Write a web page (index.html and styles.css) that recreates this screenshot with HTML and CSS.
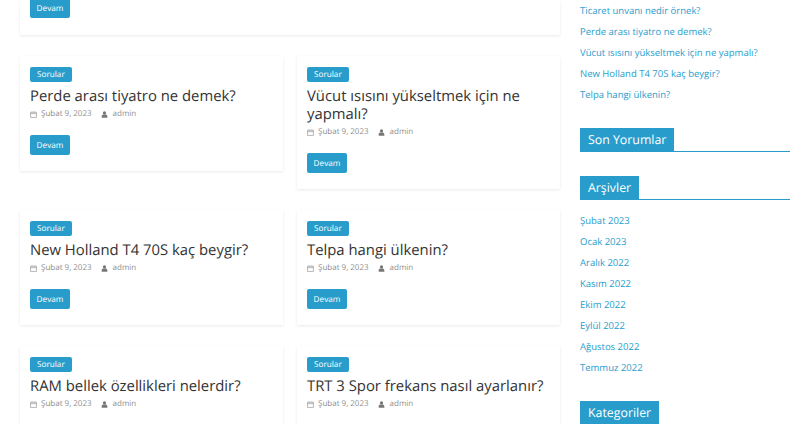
FILE: index.html
```html
<!DOCTYPE html>
<html lang="tr">
<head>
<meta charset="utf-8">
<title>Sorular</title>
<link rel="stylesheet" href="styles.css">
</head>
<body>
<svg class="defs" width="0" height="0" aria-hidden="true">
  <symbol id="cal" viewBox="0 0 10 10"><path d="M.8 1.8h8.4v7.4h-8.4zM.8 3.8h8.4M3 .6v1.6M7 .6v1.6" fill="none" stroke="currentColor" stroke-width=".9"/></symbol>
  <symbol id="usr" viewBox="0 0 10 10"><circle cx="5" cy="2.8" r="2.3" fill="currentColor"/><path d="M1 9.6v-1.8c0-1.8 1.2-2.8 2.2-2.8h3.6c1 0 2.2 1 2.2 2.8v1.8z" fill="currentColor"/></symbol>
</svg>
<div class="page">
  <main class="content">
    <article class="card wide">
      <a class="btn">Devam</a>
    </article>
    <div class="grid">
      <article class="card">
        <a class="tag">Sorular</a>
        <h2>Perde arası tiyatro ne demek?</h2>
        <p class="meta"><svg class="ic"><use href="#cal"/></svg><span>Şubat 9, 2023</span><svg class="ic usr"><use href="#usr"/></svg><span>admin</span></p>
        <a class="btn">Devam</a>
      </article>
      <article class="card">
        <a class="tag">Sorular</a>
        <h2>Vücut ısısını yükseltmek için ne yapmalı?</h2>
        <p class="meta"><svg class="ic"><use href="#cal"/></svg><span>Şubat 9, 2023</span><svg class="ic usr"><use href="#usr"/></svg><span>admin</span></p>
        <a class="btn">Devam</a>
      </article>
      <article class="card">
        <a class="tag">Sorular</a>
        <h2>New Holland T4 70S kaç beygir?</h2>
        <p class="meta"><svg class="ic"><use href="#cal"/></svg><span>Şubat 9, 2023</span><svg class="ic usr"><use href="#usr"/></svg><span>admin</span></p>
        <a class="btn">Devam</a>
      </article>
      <article class="card">
        <a class="tag">Sorular</a>
        <h2>Telpa hangi ülkenin?</h2>
        <p class="meta"><svg class="ic"><use href="#cal"/></svg><span>Şubat 9, 2023</span><svg class="ic usr"><use href="#usr"/></svg><span>admin</span></p>
        <a class="btn">Devam</a>
      </article>
      <article class="card">
        <a class="tag">Sorular</a>
        <h2>RAM bellek özellikleri nelerdir?</h2>
        <p class="meta"><svg class="ic"><use href="#cal"/></svg><span>Şubat 9, 2023</span><svg class="ic usr"><use href="#usr"/></svg><span>admin</span></p>
      </article>
      <article class="card">
        <a class="tag">Sorular</a>
        <h2>TRT 3 Spor frekans nasıl ayarlanır?</h2>
        <p class="meta"><svg class="ic"><use href="#cal"/></svg><span>Şubat 9, 2023</span><svg class="ic usr"><use href="#usr"/></svg><span>admin</span></p>
      </article>
    </div>
  </main>
  <aside class="sidebar">
    <ul class="links">
      <li>Ticaret unvanı nedir örnek?</li>
      <li>Perde arası tiyatro ne demek?</li>
      <li>Vücut ısısını yükseltmek için ne yapmalı?</li>
      <li>New Holland T4 70S kaç beygir?</li>
      <li>Telpa hangi ülkenin?</li>
    </ul>
    <h3 class="widget-title"><span>Son Yorumlar</span></h3>
    <h3 class="widget-title"><span>Arşivler</span></h3>
    <ul class="links">
      <li>Şubat 2023</li>
      <li>Ocak 2023</li>
      <li>Aralık 2022</li>
      <li>Kasım 2022</li>
      <li>Ekim 2022</li>
      <li>Eylül 2022</li>
      <li>Ağustos 2022</li>
      <li>Temmuz 2022</li>
    </ul>
    <h3 class="widget-title"><span>Kategoriler</span></h3>
  </aside>
</div>
</body>
</html>
```
FILE: styles.css
```css
* { box-sizing: border-box; }
html, body { margin: 0; height: 424px; overflow: hidden; background: #fff; }
body { font-family: "Open Sans", "Noto Sans", sans-serif; color: #3f3f3f; text-rendering: geometricPrecision; }
.defs { position: absolute; }
.page { display: flex; align-items: flex-start; height: 424px; overflow: hidden; padding-left: 20px; }
.content { width: 540px; flex: none; }
.sidebar { width: 210px; margin-left: 20px; flex: none; }
.card { background: #fff; padding: 11px 10px 16px; box-shadow: 0 1px 3px rgba(0,0,0,.09); border-radius: 1px; }
.card.wide { height: 35px; margin-bottom: 21px; display: flex; align-items: flex-end; padding: 0 10px 17px; }
.grid { display: grid; grid-template-columns: 263px 263px; column-gap: 14px; row-gap: 21px; align-items: start; }
.tag { display: block; width: max-content; background: #289dcc; color: #fff; font-size: 8.2px; line-height: 15px; padding: 0 7px; border-radius: 2px; }
.card h2 { margin: 5px 0 0; font-size: 14.85px; font-weight: 400; line-height: 18px; color: #333; }
.meta { margin: 3px 0 0; display: flex; align-items: center; font-size: 8px; line-height: 12px; color: #8f8f8f; }
.ic { width: 7px; height: 7px; margin-right: 4px; flex: none; }
.ic.usr { margin-left: 9px; margin-right: 5px; color: #777; }
.btn { display: flex; align-items: center; justify-content: center; width: 40px; height: 20px; margin-top: 15px; background: #289dcc; color: #fff; font-size: 8.2px; border-radius: 2px; }
.card.wide .btn { margin-top: 0; flex: none; }
.links { list-style: none; margin: 0; padding: 0; color: #289dcc; font-size: 9.5px; line-height: 21px; }
.widget-title { margin: 23px 0 10px; border-bottom: 1px solid #289dcc; font-size: 12.35px; font-weight: 400; line-height: 23px; height: 24px; }
.widget-title + .widget-title { margin-top: 24px; }
.widget-title span { display: inline-block; height: 24px; padding: 0 8px; background: #289dcc; color: #fff; }
```
